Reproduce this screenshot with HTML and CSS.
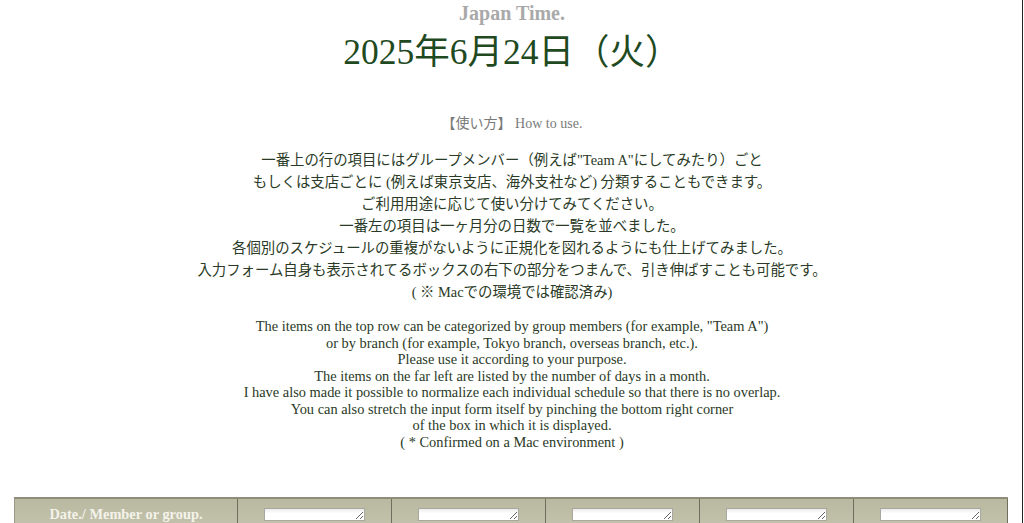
FILE: index.html
```html
<!DOCTYPE html>
<html lang="ja">
<head>
<meta charset="utf-8">
<title>Japan Time.</title>
<link rel="stylesheet" href="styles.css">
</head>
<body>
<header class="top">
  <h2 class="site-title">Japan Time.</h2>
  <h1 class="today">2025年6月24日（火）</h1>
</header>
<section class="intro">
  <p class="howto">【使い方】 How to use.</p>
  <p class="jp">一番上の行の項目にはグループメンバー（例えば"Team A"にしてみたり）ごと<br>
  もしくは支店ごとに (例えば東京支店、海外支社など) 分類することもできます。<br>
  ご利用用途に応じて使い分けてみてください。<br>
  一番左の項目は一ヶ月分の日数で一覧を並べました。<br>
  各個別のスケジュールの重複がないように正規化を図れるようにも仕上げてみました。<br>
  入力フォーム自身も表示されてるボックスの右下の部分をつまんで、引き伸ばすことも可能です。<br>
  ( ※ Macでの環境では確認済み)</p>
  <p class="en">The items on the top row can be categorized by group members (for example, "Team A")<br>
  or by branch (for example, Tokyo branch, overseas branch, etc.).<br>
  Please use it according to your purpose.<br>
  The items on the far left are listed by the number of days in a month.<br>
  I have also made it possible to normalize each individual schedule so that there is no overlap.<br>
  You can also stretch the input form itself by pinching the bottom right corner<br>
  of the box in which it is displayed.<br>
  ( * Confirmed on a Mac environment )</p>
</section>
<table class="sched">
  <colgroup>
    <col class="col-label">
    <col class="col-member">
    <col class="col-member">
    <col class="col-member">
    <col class="col-member">
    <col class="col-member">
  </colgroup>
  <thead>
    <tr>
      <th class="head-label">Date./ Member or group.</th>
      <th><textarea class="cell-input"></textarea></th>
      <th><textarea class="cell-input"></textarea></th>
      <th><textarea class="cell-input"></textarea></th>
      <th><textarea class="cell-input"></textarea></th>
      <th><textarea class="cell-input"></textarea></th>
    </tr>
  </thead>
</table>
<div class="edge"></div>
</body>
</html>
```

FILE: styles.css
```css
html, body {
  margin: 0;
  padding: 0;
  background: #ffffff;
}
body {
  font-family: "Liberation Serif", "Noto Sans CJK JP", serif;
  text-align: center;
  color: #2a3a26;
}
.top {
  padding-top: 1px;
}
.site-title {
  margin: 0;
  font-size: 20px;
  line-height: 24px;
  font-weight: bold;
  color: #a9a9a9;
}
.today {
  margin: 7px 0 0;
  font-size: 35.5px;
  line-height: 40px;
  font-weight: normal;
  color: #1f4a1f;
}
.intro {
  margin-top: 42px;
}
.howto {
  margin: 0;
  font-size: 14px;
  line-height: 20px;
  color: #7a7a7a;
}
.jp {
  margin: 15px 0 0;
  font-size: 14.4px;
  line-height: 22px;
}
.en {
  margin: 15px 0 0;
  font-size: 14.4px;
  line-height: 16.5px;
}
.sched {
  margin: 47px 0 0 14px;
  width: 993px;
  border-collapse: collapse;
  table-layout: fixed;
}
.col-label {
  width: 223px;
}
.col-member {
  width: 154px;
}
.sched th {
  height: 30px;
  padding: 0;
  background: linear-gradient(#b9b8a0, #c3c2ac);
  border-top: 2px solid #8e8d7c;
  border-left: 1px solid #6e6d5e;
  border-right: 1px solid #6e6d5e;
  vertical-align: middle;
}
.sched th.head-label {
  color: #f4f3ea;
  font-size: 14.4px;
  font-weight: bold;
  border-left: 1px solid #9a9987;
}
.cell-input {
  display: block;
  margin: 0 auto;
  width: 101px;
  height: 13px;
  box-sizing: border-box;
  padding: 0;
  border: 1px solid #a8a8a0;
  background: linear-gradient(#ececec, #ffffff 40%);
  font-size: 10px;
  resize: both;
}
.edge {
  position: fixed;
  top: 0;
  bottom: 0;
  right: 1px;
  width: 1px;
  background: #222;
}
```
